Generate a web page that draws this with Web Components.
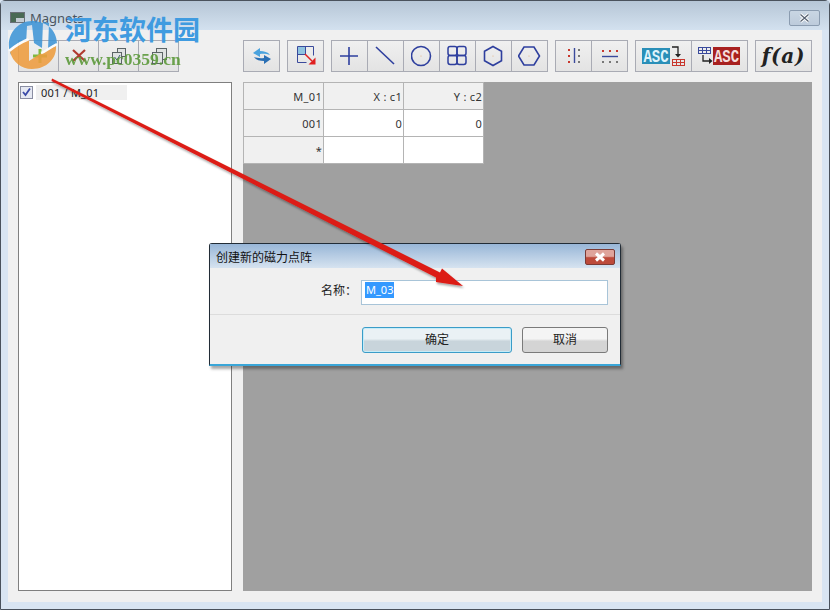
<!DOCTYPE html>
<html lang="zh">
<head>
<meta charset="utf-8">
<title>Magnets</title>
<style>
  html, body { margin: 0; padding: 0; background: #d9e5f2; }
  svg { display: block; }
  .fa { font: italic bold 20px "DejaVu Serif", "Liberation Serif", serif; color: #222; letter-spacing: .8px; white-space: nowrap; }
</style>
</head>
<body>

<m-window caption="Magnets">
  <m-toolbar slot="left-tools">
    <m-group>
      <m-tool w="41"><svg width="20" height="20" viewBox="0 0 20 20"><path d="M11 3v14M4 10h14" stroke="#7fb93f" stroke-width="3"/></svg></m-tool>
      <m-tool w="41"><svg width="20" height="20" viewBox="0 0 20 20"><path d="M4 4l12 11M16 4L4 15" stroke="#b03a30" stroke-width="2.200"/></svg></m-tool>
      <m-tool w="41"><svg width="18" height="18" viewBox="0 0 18 18" fill="#dfe2e2" stroke="#5c6466"><rect x="7.500" y="1.500" width="8" height="8"/><rect x="2.500" y="5.500" width="9" height="11"/><path d="M4.500 10l2.500 3 3-5" fill="none" stroke="#3d5a78"/></svg></m-tool>
      <m-tool w="41"><svg width="18" height="18" viewBox="0 0 18 18" fill="#dfe2e2" stroke="#5c6466"><rect x="6.500" y="1.500" width="10" height="11"/><rect x="2.500" y="5.500" width="10" height="11"/></svg></m-tool>
    </m-group>
  </m-toolbar>

  <m-list slot="list">
    <m-list-item checked>001 / M_01</m-list-item>
  </m-list>

  <m-toolbar slot="right-tools">
    <m-group>
      <m-tool><svg width="20" height="18" viewBox="0 0 20 18"><path d="M1 6l7-5v3c4 0 8 1 10 4-3-1-6-1.500-10-1v3z" fill="#4aa3de"/><path d="M19 12l-7 5v-3c-4 0-8-1-10-4 3 1 6 1.500 10 1V8z" fill="#2a6fb4"/></svg></m-tool>
    </m-group>
    <m-group>
      <m-tool><svg width="22" height="20" viewBox="0 0 22 20"><rect x="2.500" y=".5" width="8" height="8" fill="#8fc3e0"/><path d="M2.500.5h16v9M2.500.5v16h9M2.500 8.500h8v-8" fill="none" stroke="#3a4a9c"/><path d="M10 8l7 7" stroke="#e02020" stroke-width="1.500"/><path d="M20.500 11.500v7h-7z" fill="#e02020"/></svg></m-tool>
    </m-group>
    <m-group>
      <m-tool><svg width="20" height="20" viewBox="0 0 20 20"><path d="M9 1v18M0 10h18" stroke="#2e3f9e" stroke-width="1.600"/></svg></m-tool>
      <m-tool><svg width="22" height="20" viewBox="0 0 22 20"><path d="M1 1l18 17" stroke="#2e3f9e" stroke-width="1.600"/></svg></m-tool>
      <m-tool><svg width="22" height="22" viewBox="0 0 22 22"><circle cx="10" cy="11" r="9.500" fill="none" stroke="#2e3f9e" stroke-width="1.600"/><circle cx="10" cy="11" r=".6" fill="#e0b080"/></svg></m-tool>
      <m-tool><svg width="22" height="22" viewBox="0 0 22 22" fill="none" stroke="#2e3f9e" stroke-width="1.500"><rect x="1" y="1.500" width="9" height="9" rx="2.200"/><rect x="10" y="1.500" width="9" height="9" rx="2.200"/><rect x="1" y="10.500" width="9" height="9" rx="2.200"/><rect x="10" y="10.500" width="9" height="9" rx="2.200"/></svg></m-tool>
      <m-tool><svg width="22" height="22" viewBox="0 0 22 22"><path d="M10 1.500l8.500 4.800v9.400L10 20.500l-8.500-4.800V6.300z" fill="none" stroke="#2e3f9e" stroke-width="1.600"/><circle cx="10" cy="11" r=".6" fill="#e0b080"/></svg></m-tool>
      <m-tool><svg width="24" height="22" viewBox="0 0 24 22"><path d="M6 2h10l5.500 9L16 20H6L.5 11z" fill="none" stroke="#2e3f9e" stroke-width="1.600"/><circle cx="11" cy="11" r=".6" fill="#e0b080"/></svg></m-tool>
    </m-group>
    <m-group>
      <m-tool><svg width="20" height="20" viewBox="0 0 20 20"><path d="M10.500 2v15" stroke="#3a4a9c" stroke-width="1.400"/><g fill="#c8372d"><rect x="4" y="3" width="2" height="2"/><rect x="4" y="9" width="2" height="2"/><rect x="4" y="15" width="2" height="2"/></g><g fill="#777"><rect x="14" y="3" width="2" height="2"/><rect x="14" y="9" width="2" height="2"/><rect x="14" y="15" width="2" height="2"/></g></svg></m-tool>
      <m-tool><svg width="26" height="18" viewBox="0 0 26 18"><path d="M5 9.500h16" stroke="#3a4a9c" stroke-width="1.400"/><g fill="#c8372d"><rect x="5" y="3" width="2" height="2"/><rect x="12" y="3" width="2" height="2"/><rect x="19" y="3" width="2" height="2"/></g><g fill="#777"><rect x="5" y="14" width="2" height="2"/><rect x="12" y="14" width="2" height="2"/><rect x="19" y="14" width="2" height="2"/></g></svg></m-tool>
    </m-group>
    <m-group>
      <m-tool w="57"><svg width="44" height="20" viewBox="0 0 44 20"><rect x="0" y="2" width="28" height="16" fill="#2a8fb8"/><text transform="translate(14 15.500) scale(1 1.300)" text-anchor="middle" font-family="Liberation Mono" font-weight="700" font-size="14" fill="#dff3fb">ASC</text><path d="M30 1h6v8" fill="none" stroke="#222" stroke-width="1.300"/><path d="M33 8h6l-3 3.500z" fill="#222"/><g fill="none" stroke="#c8372d"><rect x="30.500" y="13.500" width="12" height="6"/><path d="M34.500 13.500v6M38.500 13.500v6M30.500 16.500h12"/></g></svg></m-tool>
      <m-tool w="57"><svg width="44" height="20" viewBox="0 0 44 20"><g fill="none" stroke="#3a4a9c"><rect x=".5" y="1.500" width="12" height="6"/><path d="M4.500 1.500v6M8.500 1.500v6M.5 4.500h12"/></g><path d="M5 9v6h7" fill="none" stroke="#222" stroke-width="1.300"/><path d="M11 12v6l3.500-3z" fill="#222"/><rect x="15" y="1" width="27" height="18" fill="#a8201f"/><text transform="translate(28.500 15.500) scale(1 1.300)" text-anchor="middle" font-family="Liberation Mono" font-weight="700" font-size="14" fill="#f5dcdc">ASC</text></svg></m-tool>
    </m-group>
    <m-group>
      <m-tool w="57"><span class="fa">f(a)</span></m-tool>
    </m-group>
  </m-toolbar>

  <m-canvas slot="canvas">
    <m-grid></m-grid>
  </m-canvas>
</m-window>

<m-dialog caption="创建新的磁力点阵" label="名称：" value="M_03" ok="确定" cancel="取消"></m-dialog>
<m-arrow></m-arrow>
<m-watermark></m-watermark>

<script>
const UI_FONT = '"Noto Sans", "Liberation Sans", "Noto Sans CJK SC", sans-serif';

/* outer Aero style window frame, the page content goes in through slots */
class MWindow extends HTMLElement {
  connectedCallback() {
    const root = this.attachShadow({ mode: 'open' });
    root.innerHTML = `<style>
      :host { display: flex; flex-direction: column; box-sizing: border-box; width: 830px; height: 610px;
        border: 1px solid #4a525c; border-radius: 5px 5px 0 0; background: #d9e5f2; }
      .title { display: flex; align-items: flex-start; height: 29px; flex: none; padding: 9px 9px 0 9px; box-sizing: border-box;
        background: linear-gradient(#b6c6d6, #d3e1ef); font: 13px/16px ${UI_FONT}; color: #4a5560; }
      .ico { width: 15px; height: 11px; margin: 2px 5px 0 0; background: #c3ccd3; border: 1px solid #6a7078; box-sizing: border-box; box-shadow: inset 5px 5px 0 #4a6a55; }
      .cap { flex: 1; }
      .close { width: 31px; height: 16px; border: 1px solid #8b9cb0; border-radius: 2px; box-sizing: border-box;
        display: flex; align-items: center; justify-content: center; background: linear-gradient(#c9d6e3, #bdcbdb); }
      .client { flex: 1; margin: 0 7px 7px; background: #f0f0f0; display: grid; box-sizing: border-box; padding: 10px 10px 11px 10px;
        grid-template-columns: 214px 1fr; grid-template-rows: 32px 1fr; gap: 10px 11px; }
    </style>
    <div class="title"><span class="ico"></span><span class="cap">${this.getAttribute('caption')}</span>
      <span class="close"><svg width="13" height="10" viewBox="0 0 13 10"><path d="M2.500 1.500l8 7M10.500 1.500l-8 7" stroke="#fff" stroke-width="3"/><path d="M2.500 1.500l8 7M10.500 1.500l-8 7" stroke="#556070" stroke-width="1.200"/></svg></span></div>
    <div class="client">
      <slot name="left-tools"></slot><slot name="right-tools"></slot>
      <slot name="list"></slot><slot name="canvas"></slot>
    </div>`;
  }
}

class MToolbar extends HTMLElement {
  connectedCallback() {
    this.attachShadow({ mode: 'open' }).innerHTML = `<style>
      :host { display: flex; gap: 7px; }
    </style><slot></slot>`;
  }
}

class MGroup extends HTMLElement {
  connectedCallback() {
    this.attachShadow({ mode: 'open' }).innerHTML = `<style>:host { display: flex; }</style><slot></slot>`;
  }
}

class MTool extends HTMLElement {
  connectedCallback() {
    const w = this.getAttribute('w') || 37;
    this.attachShadow({ mode: 'open' }).innerHTML = `<style>
      :host { display: flex; align-items: center; justify-content: center; box-sizing: border-box; width: ${w}px; height: 32px;
        border: 1px solid #a9abb4; background: linear-gradient(#f0f0f0, #e3e3e3); }
      :host(:not(:first-child)) { margin-left: -1px; }
    </style><slot></slot>`;
  }
}

class MList extends HTMLElement {
  connectedCallback() {
    this.attachShadow({ mode: 'open' }).innerHTML = `<style>
      :host { display: block; box-sizing: border-box; border: 1px solid #7f7f7f; background: #fff; padding: 2px 0 0 1px; }
    </style><slot></slot>`;
  }
}

class MListItem extends HTMLElement {
  connectedCallback() {
    this.attachShadow({ mode: 'open' }).innerHTML = `<style>
      :host { display: flex; align-items: center; height: 15px; font: 11px ${UI_FONT}; color: #222; letter-spacing: .2px; }
      .box { width: 13px; height: 13px; box-sizing: border-box; border: 1px solid #8a8ea2; background: #e6e9f2; margin-right: 3px; flex: none; }
      .txt { width: 86px; height: 15px; line-height: 15px; padding-left: 5px; background: #f0f0f0; white-space: nowrap; }
    </style>
    <span class="box"><svg width="11" height="11" viewBox="0 0 11 11" style="display:block"><path d="M2 5l2.500 3L9 1.500" fill="none" stroke="#3a4aa8" stroke-width="1.800"/></svg></span>
    <span class="txt"><slot></slot></span>`;
  }
}

class MCanvas extends HTMLElement {
  connectedCallback() {
    this.attachShadow({ mode: 'open' }).innerHTML = `<style>
      :host { display: block; background: #a0a0a0; }
    </style><slot></slot>`;
  }
}

class MGrid extends HTMLElement {
  connectedCallback() {
    const rows = [['M_01', 'X : c1', 'Y : c2'], ['001', '0', '0'], ['*', '', '']];
    const cells = rows.map((r, i) => r.map((t, j) =>
      `<div class="c ${i === 0 || j === 0 ? 'h' : ''}">${t}</div>`).join('')).join('');
    this.attachShadow({ mode: 'open' }).innerHTML = `<style>
      :host { display: grid; width: 241px; box-sizing: border-box; border-left: 1px solid #b4b4b4; border-top: 1px solid #b4b4b4;
        grid-template-columns: repeat(3, 80px); grid-auto-rows: 27px; font: 11px ${UI_FONT}; color: #333; }
      .c { box-sizing: border-box; background: #fff; border-right: 1px solid #b4b4b4; border-bottom: 1px solid #b4b4b4;
        display: flex; align-items: center; justify-content: flex-end; padding-right: 1px; letter-spacing: .3px; }
      .h { background: #f0f0f0; }
    </style>${cells}`;
  }
}

/* modal dialog floats over the window */
class MDialog extends HTMLElement {
  connectedCallback() {
    const a = n => this.getAttribute(n);
    this.attachShadow({ mode: 'open' }).innerHTML = `<style>
      :host { position: absolute; left: 209px; top: 243px; width: 412px; height: 123px; box-sizing: border-box; display: flex; flex-direction: column;
        border: 1px solid #222c36; border-bottom: 2px solid #3aa6d8; border-radius: 3px 3px 0 0; background: #f0f0f0; font: 12px ${UI_FONT}, "Noto Sans CJK SC"; color: #222;
        box-shadow: 2px 3px 3px rgba(0,0,0,.35); }
      .title { flex: none; height: 24px; box-sizing: border-box; display: flex; justify-content: space-between; padding: 5px 5px 0 6px;
        background: linear-gradient(#98b6d7, #d6e3f0); color: #111; }
      .title > span:first-child { margin-top: -1px; }
      .close { width: 30px; height: 16px; box-sizing: border-box; border: 1px solid #7b3a34; border-radius: 2px; display: flex; align-items: center; justify-content: center;
        background: linear-gradient(#dfa49b 0 45%, #bd4a3a 55% 100%); }
      .form { flex: none; height: 47px; box-sizing: border-box; border-bottom: 1px solid #dcdcdc; display: flex; align-items: flex-start; justify-content: flex-end; padding: 12px 12px 0 0; }
      .lab { line-height: 21px; margin-right: 4px; }
      .inp { width: 247px; height: 25px; box-sizing: border-box; border: 1px solid #a8c4d8; background: #fff; padding: 1px 3px; }
      .sel { display: inline-block; height: 16px; line-height: 16px; background: #3399ff; color: #fff; font-size: 11px; padding: 0 1px; vertical-align: top; }
      .btns { flex: 1; display: flex; justify-content: flex-end; gap: 10px; padding: 12px 12px 0 0; }
      .btn { height: 26px; box-sizing: border-box; border: 1px solid #7a7a7a; border-radius: 3px; text-align: center; line-height: 24px;
        background: linear-gradient(#f4f4f4 0 45%, #d4d4d4 55% 100%); }
      .ok { width: 150px; border: 1px solid #3a9cc8; box-shadow: inset 0 0 0 1px #c5ecf8; background: linear-gradient(#eaf1f5 0 45%, #c8d4db 55% 100%); }
      .cancel { width: 86px; }
    </style>
    <div class="title"><span>${a('caption')}</span><span class="close"><svg width="14" height="10" viewBox="0 0 14 10"><path d="M3 1.500l8 7M11 1.500l-8 7" stroke="#fff" stroke-width="3"/></svg></span></div>
    <div class="form"><span class="lab">${a('label')}</span><div class="inp"><span class="sel">${a('value')}</span></div></div>
    <div class="btns"><div class="btn ok">${a('ok')}</div><div class="btn cancel">${a('cancel')}</div></div>`;
  }
}

/* red annotation arrow painted on top of the screenshot */
class MArrow extends HTMLElement {
  connectedCallback() {
    this.attachShadow({ mode: 'open' }).innerHTML = `<style>
      :host { position: absolute; left: 0; top: 0; width: 830px; height: 610px; pointer-events: none; }
    </style>
    <svg width="830" height="610" viewBox="0 0 830 610">
      <defs><filter id="s" x="-5%" y="-5%" width="110%" height="110%"><feDropShadow dx="1" dy="2" stdDeviation="1.200" flood-color="#000" flood-opacity=".35"/></filter></defs>
      <path filter="url(#s)" d="M52 78.500L51.500 81 436 277.500 436 282 463 286 442 268.500 440 272.500z" fill="#dc1a14"/>
    </svg>`;
  }
}

/* site watermark in the top left corner */
class MWatermark extends HTMLElement {
  connectedCallback() {
    this.attachShadow({ mode: 'open' }).innerHTML = `<style>
      :host { position: absolute; left: 5px; top: 10px; width: 200px; height: 60px; pointer-events: none; }
      svg { position: absolute; left: 0; top: 9px; opacity: .88; }
      .txt { display: flex; flex-direction: column; margin-left: 60px; }
      .cn { font: 700 27px/32px "Noto Sans CJK SC", sans-serif; color: #3f9be0; margin-top: 3px; white-space: nowrap; }
      .en { font: 700 17.500px/20px "Liberation Serif", serif; color: #5d9a3c; opacity: .9; margin-top: 4px; white-space: nowrap; }
    </style>
    <svg width="56" height="50" viewBox="0 0 56 50">
      <path d="M6 36C-1 20 10 2 27 2c14 0 25 9 25 23l-9 6 1-27-6-1-1 26-8-5-2-18-5 1-1 19-9 6z" fill="#3f95d6"/>
      <path d="M5 33c1-3 6-6 10-9l9-5v23l14-9 13-6c1 12-9 23-24 23C16 50 8 43 5 33z" fill="#ee9d3f"/>
      <path d="M4 32c6-5 15-10 20-12M52 25C44 29 40 33 36 34" fill="none" stroke="#fff" stroke-width="2.500"/>
    </svg>
    <div class="txt"><span class="cn">河东软件园</span><span class="en">www.pc0359.cn</span></div>`;
  }
}

customElements.define('m-window', MWindow);
customElements.define('m-toolbar', MToolbar);
customElements.define('m-group', MGroup);
customElements.define('m-tool', MTool);
customElements.define('m-list', MList);
customElements.define('m-list-item', MListItem);
customElements.define('m-canvas', MCanvas);
customElements.define('m-grid', MGrid);
customElements.define('m-dialog', MDialog);
customElements.define('m-arrow', MArrow);
customElements.define('m-watermark', MWatermark);
</script>
</body>
</html>
